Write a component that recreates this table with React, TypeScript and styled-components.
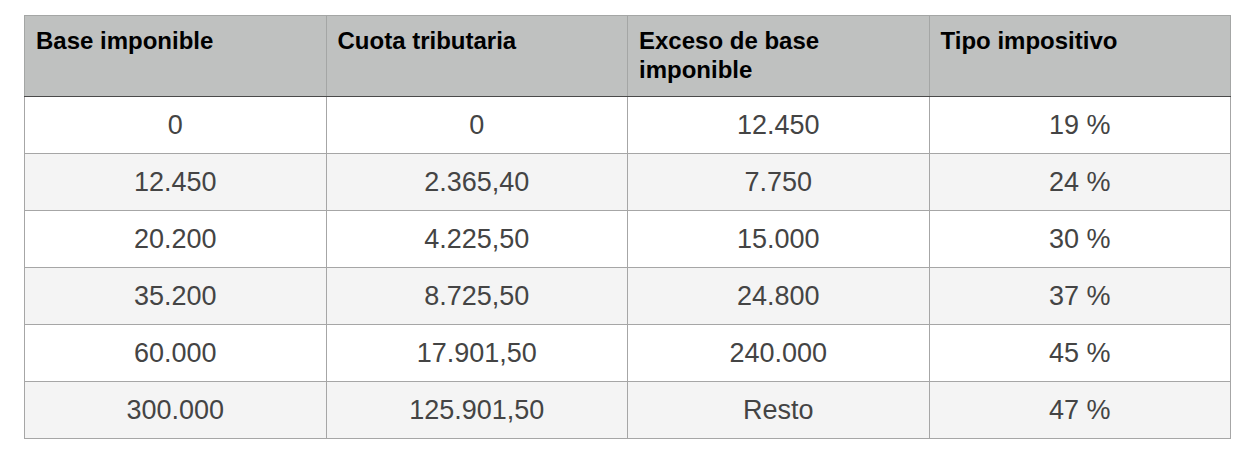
import React from "react";
import styled, { createGlobalStyle } from "styled-components";

const Global = createGlobalStyle`
  html, body { margin: 0; padding: 0; background: #ffffff; }
  body { font-family: "Liberation Sans", Arial, Helvetica, sans-serif; }
`;

const Page = styled.div`
  padding: 15px 0 0 24px;
`;

const Table = styled.table`
  border-collapse: collapse;
  width: 1207px;
  table-layout: fixed;
`;

const HeadCell = styled.th`
  background: #bfc1c0;
  color: #000;
  font-size: 24px;
  font-weight: bold;
  line-height: 29px;
  text-align: left;
  vertical-align: top;
  padding: 10px 11px 12px;
  border: 1px solid #a4a6a5;
  border-bottom: 1px solid #4a4a4a;
`;

const Row = styled.tr<{ $alt: boolean }>`
  background: ${(p) => (p.$alt ? "#f4f4f4" : "#ffffff")};
`;

const Cell = styled.td`
  height: 57px;
  padding: 0;
  box-sizing: border-box;
  text-align: center;
  vertical-align: middle;
  font-size: 27px;
  color: #444444;
  border: 1px solid #a6a6a6;
`;

const headers = ["Base imponible", "Cuota tributaria", "Exceso de base imponible", "Tipo impositivo"];

const rows = [
  ["0", "0", "12.450", "19 %"],
  ["12.450", "2.365,40", "7.750", "24 %"],
  ["20.200", "4.225,50", "15.000", "30 %"],
  ["35.200", "8.725,50", "24.800", "37 %"],
  ["60.000", "17.901,50", "240.000", "45 %"],
  ["300.000", "125.901,50", "Resto", "47 %"],
];

export default function App() {
  return (
    <>
      <Global />
      <Page>
        <Table>
          <thead>
            <tr>
              {headers.map((h) => (
                <HeadCell key={h}>{h}</HeadCell>
              ))}
            </tr>
          </thead>
          <tbody>
            {rows.map((r, i) => (
              <Row key={i} $alt={i % 2 === 1}>
                {r.map((c, j) => (
                  <Cell key={j}>{c}</Cell>
                ))}
              </Row>
            ))}
          </tbody>
        </Table>
      </Page>
    </>
  );
}
